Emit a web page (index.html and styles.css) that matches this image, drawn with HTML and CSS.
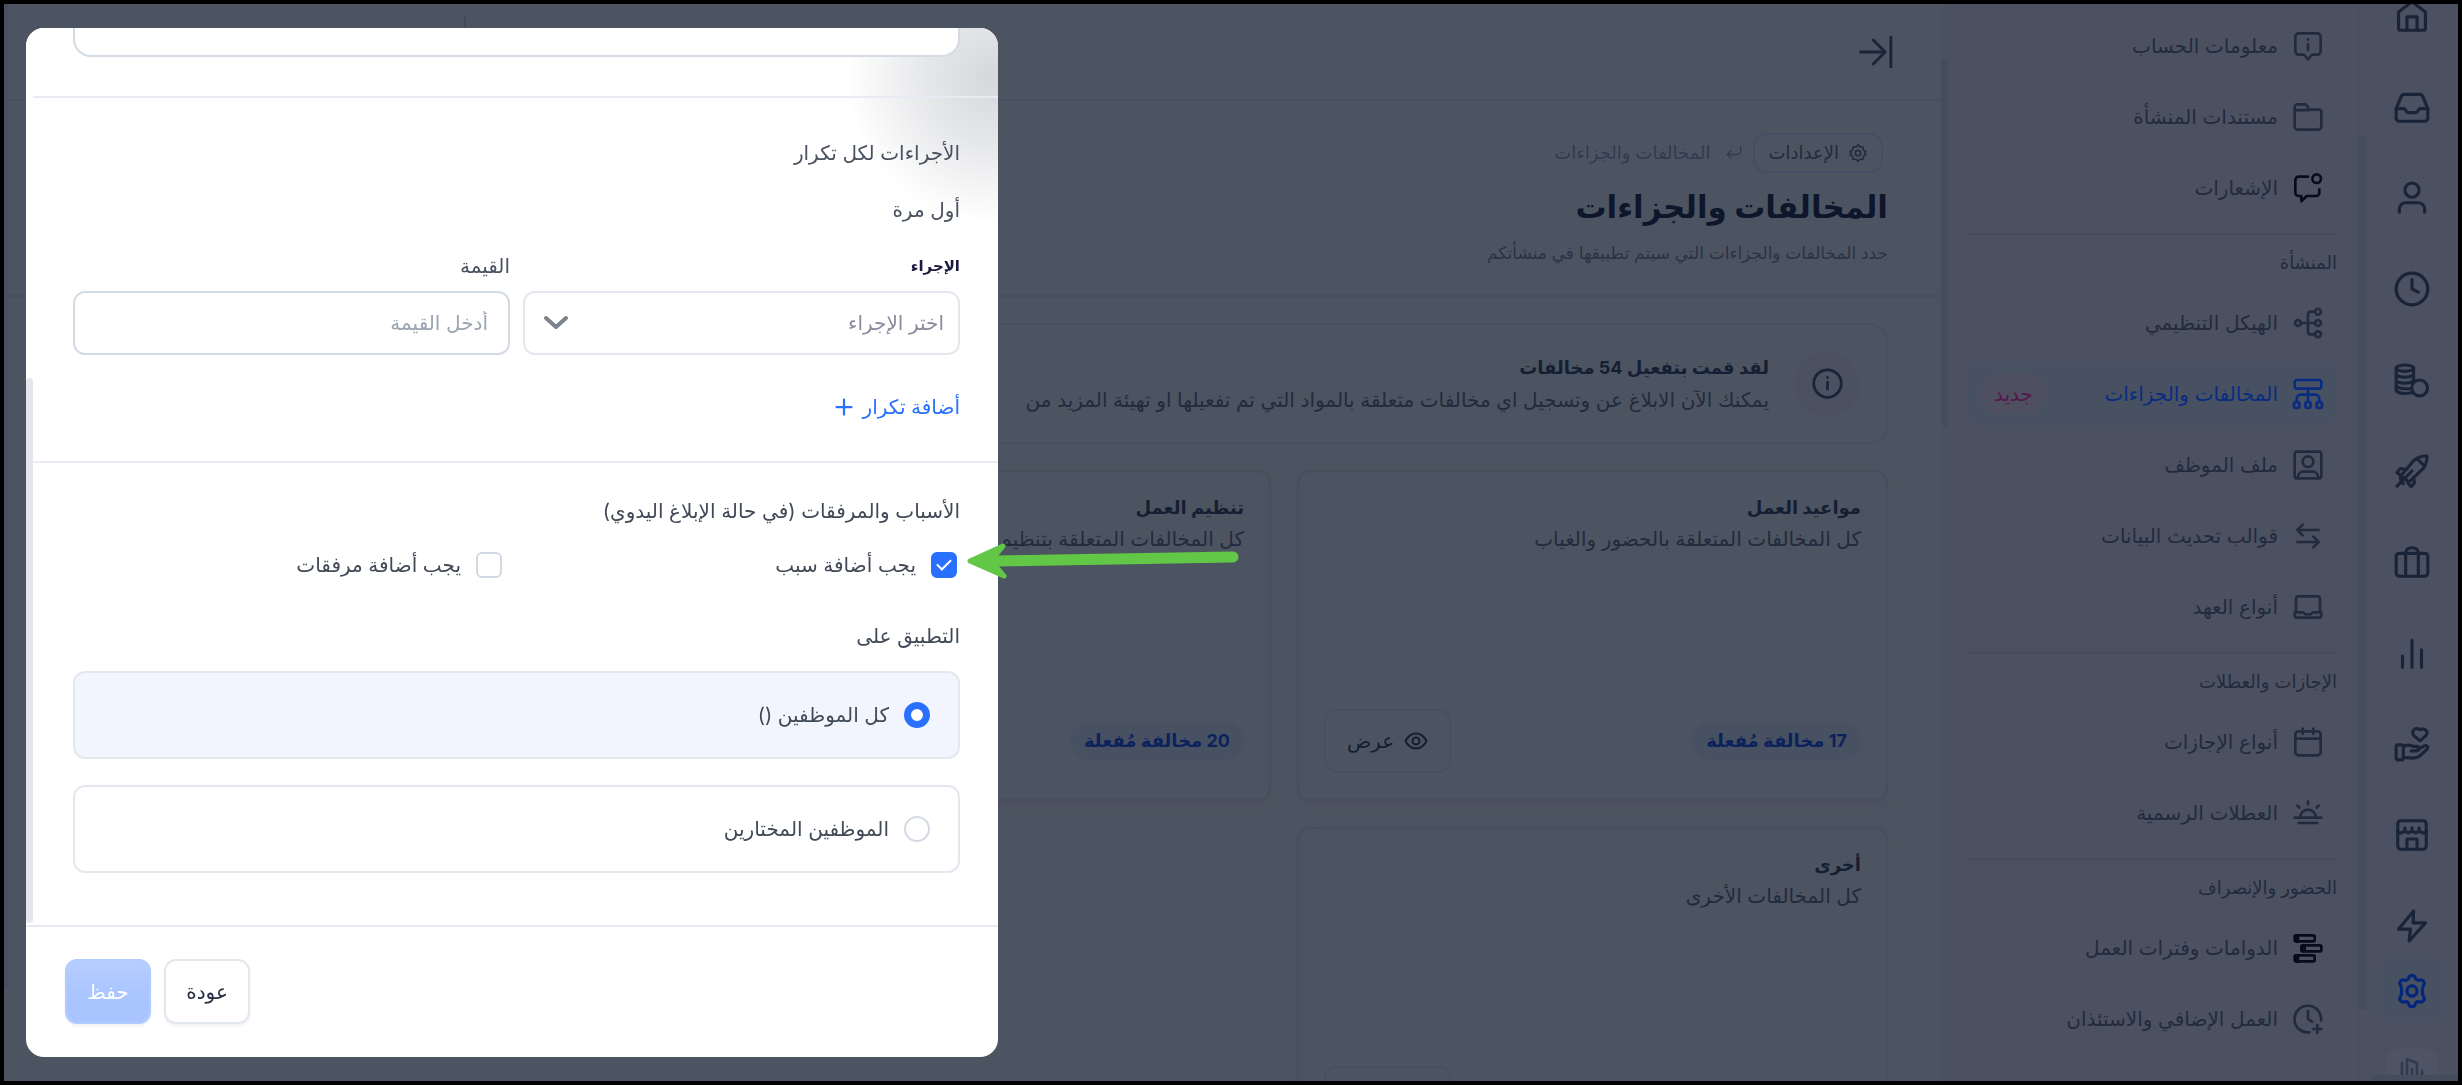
FILE: index.html
```html
<!doctype html>
<html lang="ar" dir="rtl">
    <head>
        <meta charset="utf-8">
        <meta name="viewport" content="width=device-width,initial-scale=1">
        <title>المخالفات والجزاءات</title>
        <link rel="stylesheet" href="styles.css">
    </head>
    <body>
        <div class="app">
            <nav class="rail">
                <a href="#"><svg viewBox="0 0 24 24"><path d="M3.500 9.500 12 3l8.500 6.500V19.500a1.500 1.500 0 0 1-1.500 1.500H5a1.500 1.500 0 0 1-1.500-1.500z"/><path d="M8.800 21v-8.500h6.400V21"/></svg></a>
                <a href="#"><svg viewBox="0 0 24 24"><path d="M2 13h5c1 0 1 2.500 2.500 2.500h5C16 15.500 16 13 17 13h5"/><path d="M2 13v6a2 2 0 0 0 2 2h16a2 2 0 0 0 2-2v-6l-3.200-7.500A2 2 0 0 0 17 4H7a2 2 0 0 0-1.800 1.500z"/></svg></a>
                <a href="#"><svg viewBox="0 0 24 24"><circle cx="12" cy="7" r="4.500"/><path d="M4 21v-2a4 4 0 0 1 4-4h8a4 4 0 0 1 4 4v2"/></svg></a>
                <a href="#"><svg viewBox="0 0 24 24"><circle cx="12" cy="12" r="10"/><path d="M12 6v6l4 2"/></svg></a>
                <a href="#"><svg viewBox="0 0 24 24"><ellipse cx="7.500" cy="4.500" rx="5.500" ry="2"/><path d="M2 4.500v14c0 1.100 2.500 2 5.500 2 1.500 0 3 0 4-.5M13 4.500v8.500M2 8.200c0 1.100 2.500 2 5.500 2s5.500-.9 5.500-2M2 12c0 1.100 2.500 2 5.500 2 2 0 4-.4 5-1M2 15.500c0 1.100 2.500 2 5.500 2h3"/><circle cx="16.800" cy="17" r="5"/></svg></a>
                <a href="#"><svg viewBox="0 0 24 24"><path d="M5 15 13 5.500C15.500 3 18.500 2.500 21.500 2.500c0 3-.5 6-3 8.500L10 19z"/><path d="M15 4l5 5M2.500 21.500 12 12M8 11l-3.500-.5L2.500 13l3 2.500M13 16l.5 3.500L11.500 22 9 19"/><path d="M5 15c-.8 2 0 4 1.500 5"/></svg></a>
                <a href="#"><svg viewBox="0 0 24 24"><rect x="2" y="6.500" width="20" height="14.500" rx="2"/><path d="M8 21V6.500C8 4 9.500 3 12 3s4 1 4 3.500V21"/></svg></a>
                <a href="#"><svg viewBox="0 0 24 24"><path d="M6 21v-7M12 21V4M18 21V10"/></svg></a>
                <a href="#"><svg viewBox="0 0 24 24"><rect x="2" y="12.500" width="4.500" height="9.500" rx="1"/><path d="M6.500 13.500 9 12.800c1.500-.4 2.500 0 3.500.7H15c2 0 2 2.800 0 2.800h-3.500M15.500 15.500l4.300-2.300c1.500-.7 2.700.8 1.700 2l-4.500 4.300c-2 1.500-4 1.500-6 1.300l-4.500-.3"/><path d="M17 10l-4-3.500c-2-2.500 1.500-5.800 4-3.500 3-1.500 5.500 1 4 3.500z"/></svg></a>
                <a href="#"><svg viewBox="0 0 24 24"><rect x="3" y="3" width="18" height="18" rx="2"/><path d="M3 10c1.500 1 3 1 4.500-.8 1.500 1.800 3 1.800 4.500 0 1.500 1.800 3 1.800 4.500 0C18 11 19.500 11 21 10M7.500 7.500v1.700M12 7.500v1.700M16.500 7.500v1.700M8.800 21v-6.500h6.400V21"/></svg></a>
                <a href="#"><svg viewBox="0 0 24 24"><path d="M13 2.500 3.500 14H11l-.8 7.500L20.500 10H12.700z"/></svg></a>
                <a href="#" class="active"><svg viewBox="0 0 24 24"><path d="M10 3.600c.5-2 3.500-2 4 0 .4 1.300 1.600 1.900 2.900 1.500 2-.6 3.600 1.600 2.400 3.300-.8 1.400-.8 2.300-.8 3.600s0 2.200.8 3.600c1.200 1.700-.4 3.900-2.400 3.300-1.300-.4-2.500.2-2.900 1.500-.5 2-3.500 2-4 0-.4-1.300-1.600-1.900-2.900-1.500-2 .6-3.600-1.600-2.400-3.300.8-1.400.8-2.300.8-3.600s0-2.200-.8-3.600C3.500 6.700 5.100 4.500 7.100 5.100c1.300.4 2.500-.2 2.900-1.500z"/><circle cx="12" cy="12" r="3.200"/></svg></a>
                <a href="#" class="company"><svg viewBox="0 0 24 24"><path d="M4 22V8M8 22V5l8 3v14M12 22v-9M20 22v-8"/></svg></a>
            </nav>

            <aside class="menu">
                <a href="#"><svg viewBox="0 0 24 24"><path d="M5 2.500h14a2.500 2.500 0 0 1 2.500 2.500v11a2.500 2.500 0 0 1-2.500 2.500h-4L12 22l-3-3.500H5A2.500 2.500 0 0 1 2.500 16V5A2.500 2.500 0 0 1 5 2.500zM12 7v.2M12 10.500V15"/></svg>معلومات الحساب</a>
                <a href="#"><svg viewBox="0 0 24 24"><path d="M2 6.800V4.500A2 2 0 0 1 4 2.500h5.500a2 2 0 0 1 1.700 1l1.800 3h7a2 2 0 0 1 2 2V19a2.500 2.500 0 0 1-2.500 2.500h-15A2.500 2.500 0 0 1 2 19zM2 6.800h11"/></svg>مستندات المنشأة</a>
                <a href="#"><svg class="black" viewBox="0 0 24 24"><circle cx="18.500" cy="5" r="3.200"/><path d="M12 3.500H5A2.500 2.500 0 0 0 2.500 6v9.500A2.500 2.500 0 0 0 5 18h2v4l4-4h7a2.500 2.500 0 0 0 2.500-2.500V13"/></svg>الإشعارات</a>
                <hr>
                <h3>المنشأة</h3>
                <a href="#"><svg viewBox="0 0 24 24"><circle cx="4.500" cy="12" r="2.200"/><circle cx="19.500" cy="3.500" r="2.200"/><circle cx="19.500" cy="12" r="2.200"/><circle cx="19.500" cy="20.500" r="2.200"/><path d="M6.700 12h10.500M17.300 3.500H14a2 2 0 0 0-2 2v13a2 2 0 0 0 2 2h3.300"/></svg>الهيكل التنظيمي</a>
                <a href="#" class="active"><svg viewBox="0 0 24 24"><rect x="2" y="1.500" width="20" height="6.500" rx="1.800"/><rect x="1.500" y="18" width="4" height="4.500" rx="1.500"/><rect x="10" y="18" width="4" height="4.500" rx="1.500"/><rect x="18.500" y="18" width="4" height="4.500" rx="1.500"/><path d="M12 8v10M3.500 18v-2.500a3 3 0 0 1 3-3h11a3 3 0 0 1 3 3V18"/></svg>المخالفات والجزاءات<span class="new">جديد</span></a>
                <a href="#"><svg viewBox="0 0 24 24"><rect x="2" y="2" width="20" height="20" rx="2"/><circle cx="12" cy="9.500" r="4"/><path d="M4.500 22v-1.500a4 4 0 0 1 4-3.500h7a4 4 0 0 1 4 3.500V22"/></svg>ملف الموظف</a>
                <a href="#"><svg viewBox="0 0 24 24"><path d="M20 7.500H4M8 3.500l-4 4 4 4M4 16.500h16M16 12.500l4 4-4 4"/></svg>قوالب تحديث البيانات</a>
                <a href="#"><svg viewBox="0 0 24 24"><path d="M3 16V6a2 2 0 0 1 2-2h14a2 2 0 0 1 2 2v10M2 16h6.500l1.500 1.500h4l1.500-1.500H22v2a2 2 0 0 1-2 2H4a2 2 0 0 1-2-2z"/></svg>أنواع العهد</a>
                <hr>
                <h3>الإجازات والعطلات</h3>
                <a href="#"><svg viewBox="0 0 24 24"><rect x="2.500" y="4" width="19" height="18" rx="2.500"/><path d="M2.500 9.500h19M8 2v4M16 2v4"/></svg>أنواع الإجازات</a>
                <a href="#"><svg viewBox="0 0 24 24"><path d="M2 15.500h20M5 19.500h14M6 15.500a6 6 0 0 1 12 0M12 3.500v2M4 6.500l1.500 1.500M20 6.500 18.500 8"/></svg>العطلات الرسمية</a>
                <hr>
                <h3>الحضور والإنصراف</h3>
                <a href="#"><svg class="black" viewBox="0 0 24 24"><rect x="2" y="2.500" width="15" height="4.500" rx="1"/><rect x="7" y="10" width="15" height="4.500" rx="1"/><rect x="2" y="17.500" width="15" height="4.500" rx="1"/><path d="M4 3v4M9 10.500v3.500M4 18v4" stroke-width="3"/></svg>الدوامات وفترات العمل</a>
                <a href="#"><svg viewBox="0 0 24 24"><path d="M21.800 13A10 10 0 1 0 13 22M12 6v6l3 2M19 16.500v6M16 19.500h6"/></svg>العمل الإضافي والاستئذان</a>
            </aside>

            <main>
                <header class="topbar">
                    <button type="button" aria-label="طي القائمة"><svg viewBox="0 0 24 24"><path d="M1 12h17M10 3.500l8.500 8.500-8.500 8.500M22.500 1.500v21"/></svg></button>
                </header>
                <div class="page-head">
                    <div class="breadcrumb">
                        <a href="#"><svg viewBox="0 0 24 24"><path d="M12 1l2.500 3 4-.2.500 4L22.500 10 21 12l1.500 2.500L19 16.500l-.5 4-4-.3L12 23l-2.500-2.800-4 .3-.5-4-3.500-2L3 12l-1.500-2L5 7.800l.5-4 4 .2z"/><circle cx="12" cy="12" r="3.500"/></svg>الإعدادات</a>
                        <svg viewBox="0 0 24 24"><path d="M21 4v4a6 6 0 0 1-6 6H3M8 9l-5 5 5 5"/></svg>
                        <span>المخالفات والجزاءات</span>
                    </div>
                    <h1>المخالفات والجزاءات</h1>
                    <p>حدد المخالفات والجزاءات التي سيتم تطبيقها في منشأتكم</p>
                </div>
                <div class="page-body">
                    <div class="notice">
                        <div class="notice-icon"><svg viewBox="0 0 24 24"><circle cx="12" cy="12" r="10"/><path d="M12 7.500v.2M12 11v5"/></svg></div>
                        <div>
                            <h2>لقد قمت بتفعيل 54 مخالفات</h2>
                            <p>يمكنك الآن الابلاغ عن وتسجيل اي مخالفات متعلقة بالمواد التي تم تفعيلها او تهيئة المزيد من</p>
                        </div>
                    </div>
                    <div class="cards">
                        <article class="card">
                            <h2>مواعيد العمل</h2>
                            <p>كل المخالفات المتعلقة بالحضور والغياب</p>
                            <div class="card-foot">
                                <span class="count">17 مخالفة مُفعلة</span>
                                <button type="button"><svg viewBox="0 0 24 24"><path d="M1.500 12S5 4.500 12 4.500 22.500 12 22.500 12 19 19.500 12 19.500 1.500 12 1.500 12z"/><circle cx="12" cy="12" r="3.500"/></svg>عرض</button>
                            </div>
                        </article>
                        <article class="card">
                            <h2>تنظيم العمل</h2>
                            <p>كل المخالفات المتعلقة بتنظيم</p>
                            <div class="card-foot">
                                <span class="count">20 مخالفة مُفعلة</span>
                            </div>
                        </article>
                        <article class="card new-row">
                            <h2>أخرى</h2>
                            <p>كل المخالفات الأخرى</p>
                            <div class="card-foot">
                                <button type="button" class="view" aria-label="عرض"></button>
                            </div>
                        </article>
                    </div>
                </div>
            </main>
        </div>

        <form class="modal" role="dialog">
            <div class="modal-body">
                <section class="description">
                    <textarea aria-label="الوصف"></textarea>
                </section>
                <section class="repeats">
                    <h4>الأجراءات لكل تكرار</h4>
                    <h4>أول مرة</h4>
                    <div class="fields">
                        <div>
                            <label for="action" class="strong">الإجراء</label>
                            <div class="select">
                                <select id="action">
                                    <option>اختر الإجراء</option>
                                </select>
                                <svg viewBox="0 0 24 24"><path d="M2 7l10 9L22 7"/></svg>
                            </div>
                        </div>
                        <div>
                            <label for="value">القيمة</label>
                            <input type="text" id="value" placeholder="أدخل القيمة">
                        </div>
                    </div>
                    <button type="button" class="add">أضافة تكرار <svg viewBox="0 0 24 24"><path d="M12 2v20M2 12h20"/></svg></button>
                </section>
                <section class="reasons">
                    <h4>الأسباب والمرفقات (في حالة الإبلاغ اليدوي)</h4>
                    <div class="checks">
                        <label><input type="checkbox" checked>يجب أضافة سبب</label>
                        <label><input type="checkbox">يجب أضافة مرفقات</label>
                    </div>
                    <h4>التطبيق على</h4>
                    <label class="choice"><input type="radio" name="apply" checked>كل الموظفين ()</label>
                    <label class="choice"><input type="radio" name="apply">الموظفين المختارين</label>
                </section>
            </div>
            <div class="modal-foot">
                <button type="button">عودة</button>
                <button type="submit" class="save" disabled>حفظ</button>
            </div>
        </form>

        <svg class="arrow" viewBox="0 0 272 40"><path d="M266 16 30 20"/><path class="head" d="M3 20 36 5 24 20 37 35z"/></svg>
    </body>
</html>
```
FILE: styles.css
```css
* {
    box-sizing: border-box;
}
body {
    margin: 0;
    background: #000;
    color: #222b3d;
    font-family: Inter, "DejaVu Sans", sans-serif;
    font-size: 20px;
    line-height: 32px;
}
h1, h2, h3, h4, p {
    margin: 0;
    font-size: 20px;
    font-weight: normal;
}
a {
    color: inherit;
    text-decoration: none;
}
button, input, select, textarea {
    font: inherit;
    color: inherit;
}
svg {
    flex: none;
    fill: none;
    stroke: currentColor;
    stroke-width: 2;
    stroke-linecap: round;
    stroke-linejoin: round;
}
.app {
    display: flex;
    height: 100vh;
    border: 4px solid #000;
    overflow: hidden;
    background: #4d5461;
}

/* icon rail */
.rail {
    position: relative;
    width: 100px;
    flex: none;
    display: flex;
    flex-direction: column;
    align-items: center;
    gap: 26px;
    padding-left: 6px;
    border-left: 1px solid #464d5d;
    background: #4c5161;
    color: #1a2438;
    overflow: hidden;
}
.rail a {
    width: 66px;
    height: 65px;
    flex: none;
    display: flex;
    align-items: center;
    justify-content: center;
    border-radius: 12px;
}
.rail a:first-child {
    margin-top: -21px;
}
.rail svg {
    width: 38px;
    height: 38px;
}
.rail .active {
    margin-top: -26px;
    background: #475162;
    color: #04257c;
}
.rail .company {
    width: 52px;
    align-items: flex-start;
    background: #4e5463;
    color: #2f3b50;
}
.rail .company svg {
    width: 30px;
}
.rail::after,
.menu::after,
main::after {
    content: "";
    position: absolute;
    left: 0;
    top: 132px;
    width: 7px;
    height: 874px;
    border-radius: 4px;
    background: #434d5c;
}
.rail::before {
    content: "";
    position: absolute;
    left: 13px;
    right: 0;
    bottom: 0;
    height: 6px;
    background: #434d5c;
}

/* settings menu */
.menu {
    position: relative;
    width: 417px;
    flex: none;
    display: flex;
    flex-direction: column;
    padding: 9px 21px 0 26px;
    background: #4c5161;
    overflow: hidden;
}
.menu::after {
    top: 55px;
    height: 367px;
}
.menu a {
    height: 65px;
    flex: none;
    display: flex;
    align-items: center;
    gap: 14px;
    margin-bottom: 6px;
    padding: 0 13px;
    border-radius: 12px;
}
.menu svg {
    width: 32px;
    height: 32px;
}
.menu .black {
    color: #060c1c;
}
.menu .active {
    background: #475162;
    color: #0a2c80;
}
.new {
    margin-right: auto;
    padding: 4px 14px;
    border-radius: 20px;
    background: #4e5060;
    color: #55184e;
}
.menu hr {
    width: 100%;
    margin: 7px 0 0;
    border: 0;
    border-top: 2px solid #474d5c;
}
.menu h3 {
    flex: none;
    font-size: 18px;
    line-height: 55px;
}

/* page */
main {
    position: relative;
    flex: 1;
    min-width: 0;
    overflow: hidden;
}
main::after {
    top: 0;
    width: 4px;
    height: 984px;
    background: #484f5f;
}
.topbar {
    height: 97px;
    display: flex;
    align-items: center;
    justify-content: space-between;
    padding: 0 48px 0 460px;
    border-bottom: 2px solid #484f60;
}
.topbar::after {
    content: "";
    width: 2px;
    height: 72px;
    background: #424958;
}
.topbar button {
    display: flex;
    padding: 0;
    border: 0;
    background: none;
    color: #1a2438;
}
.topbar svg {
    width: 34px;
    height: 34px;
}
.page-head {
    height: 196px;
    padding: 32px 53px 0 59px;
    border-bottom: 2px solid #474e5c;
}
.breadcrumb {
    display: flex;
    align-items: center;
    gap: 10px;
    padding-right: 5px;
    font-size: 18px;
    color: #323b50;
}
.breadcrumb a {
    display: flex;
    align-items: center;
    gap: 10px;
    height: 40px;
    padding: 0 14px;
    border: 2px solid #484d64;
    border-radius: 13px;
    color: #222b3d;
}
.breadcrumb svg {
    width: 18px;
    height: 18px;
}
.breadcrumb span {
    padding-right: 4px;
}
h1 {
    font-size: 31px;
    line-height: 68px;
    font-weight: bold;
    color: #0d162a;
}
.page-head p {
    font-size: 17px;
    line-height: 24px;
    color: #2a3346;
}
.page-body {
    padding: 26px 53px 0 59px;
}
.notice {
    height: 121px;
    display: flex;
    align-items: center;
    gap: 25px;
    padding: 0 26px;
    border: 2px solid #494f5d;
    border-radius: 18px;
    white-space: nowrap;
    overflow: hidden;
}
.notice-icon {
    width: 66px;
    height: 66px;
    flex: none;
    display: flex;
    align-items: center;
    justify-content: center;
    border-radius: 50%;
    background: #4b5161;
    color: #1a2438;
}
.notice-icon svg {
    width: 33px;
    height: 33px;
}
.notice h2,
.card h2 {
    font-size: 18px;
    font-weight: bold;
    color: #151f33;
}
.cards {
    display: grid;
    grid-template-columns: repeat(3, 1fr);
    gap: 26px;
    margin-top: 26px;
}
.card {
    height: 331px;
    display: flex;
    flex-direction: column;
    padding: 20px 25px 26px;
    border: 2px solid #474e5c;
    border-radius: 14px;
    box-shadow: 0 4px 8px #4a505d;
}
.card p {
    line-height: 30px;
}
.new-row {
    grid-column: 1;
}
.card-foot {
    min-height: 64px;
    display: flex;
    align-items: center;
    justify-content: space-between;
    margin-top: auto;
}
.count {
    padding: 3px 14px;
    border-radius: 19px;
    background: #475162;
    color: #0c225c;
    font-size: 18px;
    font-weight: bold;
}
.card-foot button {
    width: 127px;
    height: 64px;
    display: flex;
    align-items: center;
    justify-content: center;
    gap: 10px;
    padding: 0;
    border: 2px solid #475060;
    border-radius: 12px;
    background: none;
    color: #151f33;
}
.card-foot .view {
    margin-right: auto;
}
.card-foot svg {
    width: 24px;
    height: 24px;
}

/* modal */
.modal {
    position: fixed;
    top: 28px;
    bottom: 28px;
    left: 26px;
    width: min(972px, 100vw - 52px);
    display: flex;
    flex-direction: column;
    border-radius: 18px;
    overflow: hidden;
    background: #fff;
    color: #4a5261;
}
.modal-body {
    position: relative;
    flex: 1;
    min-height: 0;
    overflow: hidden;
    background: radial-gradient(circle 145px at 966px 50px, #d6d7db, #e6e7e9 45%, #fff);
}
.modal-body::after {
    content: "";
    position: absolute;
    left: 0;
    top: 350px;
    bottom: 2px;
    width: 7px;
    border-radius: 4px;
    background: #e3e7ec;
}
.modal section {
    display: flex;
    flex-direction: column;
    margin-left: 7px;
    padding: 0 38px 0 40px;
    border-bottom: 2px solid #e8ecf2;
}
.modal .description {
    padding-bottom: 39px;
}
.description textarea {
    height: 120px;
    margin-top: -91px;
    border: 2px solid #d3dbe5;
    border-radius: 18px;
    background: #fff;
    resize: none;
}
.modal .repeats {
    gap: 18px;
    padding-top: 36px;
    padding-bottom: 38px;
    align-items: flex-start;
}
.repeats h4 {
    line-height: 39px;
}
.fields {
    width: 100%;
    display: grid;
    grid-template-columns: 1fr 1fr;
    gap: 13px;
}
.fields label {
    display: block;
    height: 43px;
    line-height: 36px;
}
.fields .strong {
    font-size: 15px;
    font-weight: bold;
    color: #1c1a3c;
}
.fields input,
.fields select {
    width: 100%;
    height: 64px;
    padding: 0 20px;
    border: 2px solid #d3dbe5;
    border-radius: 12px;
    background: #fff;
}
.fields input::placeholder {
    color: #9aa4b2;
}
.select {
    position: relative;
}
.fields select {
    appearance: none;
    padding: 0 14px;
    border-color: #e3e8ee;
    color: #8c8a9e;
}
.select svg {
    position: absolute;
    left: 21px;
    top: 20px;
    width: 24px;
    height: 24px;
    stroke-width: 4;
    color: #7b838c;
}
.add {
    display: flex;
    align-items: center;
    gap: 10px;
    margin-top: 18px;
    padding: 0;
    border: 0;
    background: none;
    color: #2970ff;
}
.add svg {
    width: 18px;
    height: 18px;
    stroke-width: 3;
}
.modal .reasons {
    padding-top: 32px;
    border: 0;
    color: #414957;
}
.checks {
    display: grid;
    grid-template-columns: 1fr 1fr;
    gap: 26px;
    margin: 22px 3px 39px 0;
}
.checks label,
.choice {
    display: flex;
    align-items: center;
    gap: 15px;
}
.modal input[type="checkbox"],
.modal input[type="radio"] {
    appearance: none;
    width: 26px;
    height: 26px;
    flex: none;
    margin: 0;
    border: 2px solid #d3dae4;
    border-radius: 6px;
    background: #fff;
}
.modal input[type="checkbox"]:checked {
    display: flex;
    align-items: center;
    justify-content: center;
    border-color: #2970ff;
    background: #2970ff;
}
.modal input[type="checkbox"]:checked::before {
    content: "";
    width: 12px;
    height: 6px;
    border: solid #fff;
    border-width: 0 0 2px 2px;
    transform: translateY(-2px) rotate(-45deg);
}
.modal input[type="radio"] {
    border-radius: 50%;
}
.modal input[type="radio"]:checked {
    border: 7px solid #2970ff;
}
.choice {
    height: 88px;
    margin-top: 19px;
    padding: 0 28px;
    border: 2px solid #e3e8ee;
    border-radius: 12px;
    background: #fff;
}
.choice + .choice {
    margin-top: 26px;
}
.choice:has(:checked) {
    background: #f2f5fe;
}
.modal-foot {
    flex: none;
    display: flex;
    justify-content: flex-end;
    gap: 13px;
    padding: 32px 39px 33px;
    border-top: 2px solid #e6eaf0;
}
.modal-foot button {
    width: 86px;
    height: 65px;
    padding: 0;
    border: 2px solid #e3e8ee;
    border-radius: 12px;
    background: #fff;
    color: #272f40;
    box-shadow: 0 2px 3px #f0f2f5;
}
.modal-foot .save {
    border-color: #b1caff;
    background: linear-gradient(#b7ceff, #a9c5ff 60%);
    color: #fff;
}

/* pointer over the ticked box */
.arrow {
    position: fixed;
    left: 967px;
    top: 541px;
    width: 272px;
    height: 40px;
    color: #62c747;
    stroke-width: 11;
}
.arrow .head {
    fill: currentColor;
    stroke-width: 5;
}
```
